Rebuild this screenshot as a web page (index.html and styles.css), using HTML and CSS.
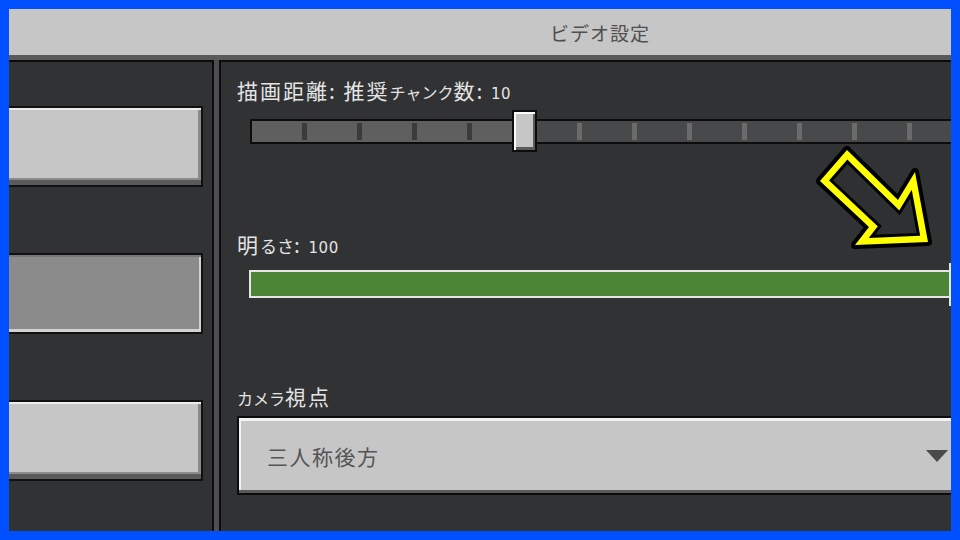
FILE: index.html
```html
<!DOCTYPE html>
<html lang="ja">
<head>
<meta charset="utf-8">
<title>ビデオ設定</title>
<link rel="stylesheet" href="styles.css">
</head>
<body>
<div class="frame">
  <div class="screen">
    <header class="titlebar"><span class="title">ビデオ設定</span></header>
    <div class="main">
      <aside class="side">
        <div class="tab"></div>
        <div class="tab tab-active"></div>
        <div class="tab"></div>
      </aside>
      <section class="content">
        <div class="label label-distance">描画距離: 推奨<span class="small">チャンク</span>数: <span class="num">10</span></div>
        <div class="slider">
          <div class="track"><div class="seg seg-done"></div><div class="seg seg-rest"></div></div>
          <div class="thumb"></div>
        </div>
        <div class="label label-brightness">明<span class="kana">るさ</span>: <span class="num">100</span></div>
        <div class="bar">
          <div class="bar-fill"></div>
          <div class="bar-thumb"></div>
        </div>
        <div class="label label-camera"><span class="small">カメラ</span>視点</div>
        <div class="dropdown">
          <span class="dd-text">三人称後方</span>
          <svg class="dd-caret" viewBox="0 0 22 12"><polygon points="0,0 22,0 11,12" fill="#4a4a4a"/></svg>
        </div>
      </section>
    </div>
  </div>
  <svg class="callout" viewBox="800 135 150 125">
    <polygon points="847,150 898,200 915,172 928,242 855,245 869,227 820,181" fill="none" stroke="#000" stroke-width="8" stroke-linejoin="round"/>
    <polygon points="847,150 898,200 915,172 928,242 855,245 869,227 820,181" fill="#ffff00"/>
    <polygon points="847.5,161.7 899.6,212.8 911,193.9 918.4,234.4 871.9,236.3 879.8,226.2 831.1,180.5" fill="#2f3032" stroke="#000" stroke-width="3" stroke-linejoin="miter"/>
  </svg>
</div>
</body>
</html>
```

FILE: styles.css
```css
html, body {
  margin: 0;
  padding: 0;
}

body {
  background: #0050ff;
  width: 960px;
  height: 540px;
  overflow: hidden;
}

.frame {
  position: relative;
  width: 960px;
  height: 540px;
  padding: 9px;
  box-sizing: border-box;
}

.screen {
  width: 942px;
  height: 522px;
  overflow: hidden;
  display: flex;
  flex-direction: column;
  background: #4e4e50;
  font-family: "Noto Sans CJK JP", "Noto Sans", sans-serif;
}

.titlebar {
  flex: none;
  height: 46px;
  background: #c6c6c6;
  border-bottom: 5px solid #5a5a5a;
  display: flex;
  align-items: center;
  justify-content: center;
  padding-left: 240px;
}

.title {
  font-size: 19px;
  color: #505050;
  letter-spacing: 1px;
}

.main {
  flex: 1;
  min-height: 0;
  display: flex;
  gap: 5px;
}

.side {
  flex: none;
  width: 203px;
  background: #313233;
  border-top: 2px solid #0c0c0c;
  border-right: 2px solid #0c0c0c;
  display: flex;
  flex-direction: column;
  gap: 66px;
  padding-top: 44px;
}

.tab {
  flex: none;
  width: 204px;
  height: 81px;
  margin-left: -10px;
  box-sizing: border-box;
  border: 2px solid #111;
  background: #c6c6c6;
  box-shadow: inset 0 2px 0 #ececec, inset 0 -5px 0 #5a5a5a, inset -3px -7px 0 #8b8b8b;
}

.tab-active {
  background: #8b8b8b;
  box-shadow: inset 0 2px 0 #777, inset -2px -3px 0 #d2d2d2;
}

.content {
  flex: 1;
  min-width: 0;
  background: #313233;
  border-top: 2px solid #0c0c0c;
  border-left: 2px solid #0c0c0c;
  padding-left: 16px;
}

.label {
  height: 24px;
  color: #e4e4e4;
  font-size: 21px;
  line-height: 24px;
  letter-spacing: 2px;
  white-space: nowrap;
}

.label-distance {
  margin-top: 16px;
}

.small {
  font-size: 16px;
  line-height: 1;
  letter-spacing: 0;
}

.kana {
  font-size: 17px;
  line-height: 1;
  letter-spacing: 0;
}

.num {
  font-family: "DejaVu Sans", sans-serif;
  font-size: 15px;
  line-height: 1;
  letter-spacing: 0.5px;
}

.slider {
  position: relative;
  margin-top: 8px;
  margin-left: 13px;
  padding-top: 9px;
  width: 720px;
  height: 33px;
}

.track {
  height: 25px;
  box-sizing: border-box;
  border: 2px solid #0c0c0c;
  display: flex;
}

.seg-done {
  width: 260px;
  background: linear-gradient(90deg, transparent 50px, #3b3b3b 50px) 0 center / 55px 17px repeat-x, #5f5f5f;
}

.seg-rest {
  flex: 1;
  background: linear-gradient(90deg, transparent 50px, #6b6b6b 50px) 15px center / 55px 17px repeat-x, #48494a;
}

.thumb {
  position: absolute;
  left: 262px;
  top: 0;
  width: 25px;
  height: 42px;
  box-sizing: border-box;
  border: 2px solid #0c0c0c;
  background: #c6c6c6;
  box-shadow: inset 2px 2px 0 #fafafa, inset -2px -3px 0 #5a5a5a;
}

.label-brightness {
  margin-top: 80px;
}

.bar {
  position: relative;
  margin-top: 14px;
  margin-left: 12px;
  width: 740px;
  height: 28px;
}

.bar-fill {
  height: 100%;
  box-sizing: border-box;
  border: 2px solid #e6e6e6;
  background: #4d8637;
}

.bar-thumb {
  position: absolute;
  left: 700px;
  top: -7px;
  width: 25px;
  height: 43px;
  box-sizing: border-box;
  border-left: 2px solid #e6e6e6;
  background: #c6c6c6;
}

.label-camera {
  margin-top: 86px;
}

.dropdown {
  margin-top: 8px;
  width: 723px;
  height: 79px;
  box-sizing: border-box;
  border: 2px solid #0c0c0c;
  background: #c6c6c6;
  box-shadow: inset 0 -3px 0 #5a5a5a, inset 2px 3px 0 #f2f2f2;
  display: flex;
  align-items: center;
  justify-content: space-between;
  padding: 0 10px 0 28px;
}

.dd-text {
  font-size: 21px;
  color: #555;
  letter-spacing: 1.5px;
}

.dd-caret {
  width: 22px;
  height: 12px;
}

.callout {
  position: absolute;
  left: 800px;
  top: 135px;
  width: 150px;
  height: 125px;
  pointer-events: none;
}
```
